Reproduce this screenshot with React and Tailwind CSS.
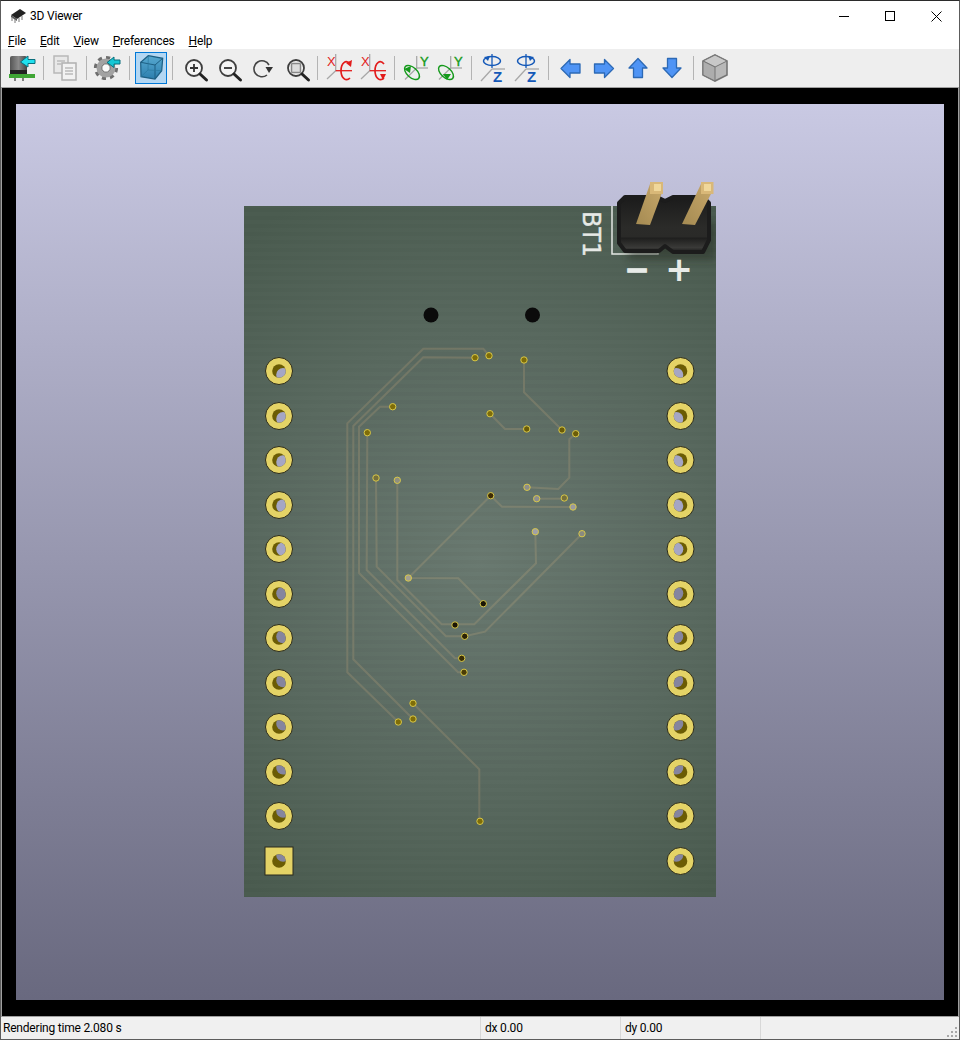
const FONT = { fontFamily: 'Roboto, "Noto Sans", sans-serif', letterSpacing: '-0.2px' };

const leftPads = [371, 416, 460, 505, 549, 594, 638, 683, 727, 772, 816];
const rightPads = [371, 416, 460, 505, 549, 594, 638, 683, 727, 772, 816, 861];

// x, y, colour seen through the drill
const vias = [
  [475, 357.7, '#7f6d08'], [489, 355.7, '#7f6d08'], [524, 360, '#7f6d08'], [392.7, 406.7, '#7f6d08'],
  [367.3, 432.7, '#7f6d08'], [490, 413.7, '#7f6d08'], [526.7, 429, '#6b5c08'], [562, 430, '#6b5c08'],
  [575.7, 433.7, '#6b5c08'], [376, 478, '#77703a'], [397.3, 480.3, '#8f8f80'], [527, 487.3, '#8e8e8a'],
  [490.7, 495.7, '#3e2c06'], [536.7, 498.7, '#8e8e90'], [564.3, 498, '#77703a'], [573, 507, '#9a9aa0'],
  [535.3, 531.7, '#a0a0a8'], [582, 533.7, '#8a8a80'], [408.3, 578, '#a5a090'], [483.3, 603.7, '#1a1505'],
  [455, 625, '#1a1505'], [464.7, 636.3, '#2a2205'], [461.7, 658.3, '#3a2e05'], [464, 672.3, '#4a3c05'],
  [413, 703.3, '#7f6d08'], [413, 719, '#7f6d08'], [398.3, 722, '#7f6d08'], [480, 821.3, '#7f6d08'],
];

const traces = [
  '489,355.7 483.3,348.7 423.3,348.7 347.3,423.3 347.3,672.3 398.3,722',
  '475,357.7 423.3,357.3 353.3,426 353.3,659.3 413,719',
  '392.7,406.7 380,406.7 359,426.7 359,573 458,672.3 464,672.3',
  '367.3,432.7 366.7,570 455,658.3 461.7,658.3',
  '376,478 376.7,566.7 446,636.3 464.7,636.3 485,631.7 582,533.7',
  '397.3,480.3 397.3,580 441.7,624.3 474.3,624.3 536,563.3 535.3,531.7',
  '490.7,495.7 408.3,578 458.3,578.3 483.3,603.7',
  '490.7,495.7 502,506.7 573,507',
  '527,487.3 558.3,489 569.3,477.7 569.3,439.3 575.7,433.7',
  '536.7,498.7 564.3,498.7',
  '490,413.7 505,429 526.7,429',
  '524,360 524,392.3 562,430',
  '413,703.3 479.3,769.3 479.3,821.3',
];

function Pad({ x, y, square }) {
  // the far end of the drill slides towards the middle of the view
  const bx = x + (480 - x) * 0.02;
  const by = y + (560 - y) * 0.02;
  const id = `hole-${Math.round(x)}-${y}`;
  return (
    <g>
      {square ? (
        <rect x={x - 14} y={y - 14} width="28" height="28" fill="#e4d366" stroke="#2b2b1c" />
      ) : (
        <circle cx={x} cy={y} r="13.5" fill="#e4d366" stroke="#2b2b1c" />
      )}
      <clipPath id={id}>
        <circle cx={x} cy={y} r="6.8" />
      </clipPath>
      <circle cx={x} cy={y} r="6.8" fill="#6b5c04" />
      <circle cx={bx} cy={by} r="6.8" fill={y < 560 ? '#a5a6c4' : '#85859f'} clipPath={`url(#${id})`} />
    </g>
  );
}

function Board() {
  return (
    <svg width="928" height="896" viewBox="16 104 928 896" className="block">
      <defs>
        <radialGradient id="boardShade" gradientUnits="userSpaceOnUse" cx="480" cy="560" r="400">
          <stop offset="0" stopColor="#6a7a71" />
          <stop offset="0.55" stopColor="#5a6a60" />
          <stop offset="1" stopColor="#4b5c50" />
        </radialGradient>
        <radialGradient id="traceShade" gradientUnits="userSpaceOnUse" cx="480" cy="560" r="400">
          <stop offset="0" stopColor="#7f8573" />
          <stop offset="0.55" stopColor="#727665" />
          <stop offset="1" stopColor="#666a58" />
        </radialGradient>
        <pattern id="scan" width="8" height="8" patternUnits="userSpaceOnUse">
          <rect width="8" height="4" fill="#000" opacity="0.025" />
        </pattern>
        <linearGradient id="pin" x1="0" y1="1" x2="1" y2="0">
          <stop offset="0" stopColor="#a48a52" />
          <stop offset="1" stopColor="#c8a86a" />
        </linearGradient>
        <linearGradient id="housing" x1="0" y1="0" x2="0" y2="1">
          <stop offset="0" stopColor="#1b1b1b" />
          <stop offset="0.55" stopColor="#2b2b29" />
          <stop offset="0.72" stopColor="#2a2a28" />
          <stop offset="0.75" stopColor="#1f1f1e" />
          <stop offset="0.92" stopColor="#3a3a38" />
          <stop offset="1" stopColor="#1a1a1a" />
        </linearGradient>
        <filter id="soft" x="-30%" y="-30%" width="160%" height="160%">
          <feGaussianBlur stdDeviation="4" />
        </filter>
        <clipPath id="boardClip">
          <rect x="244" y="206" width="472" height="691" />
        </clipPath>
      </defs>

      <rect x="244" y="206" width="472" height="691" fill="url(#boardShade)" />
      <rect x="244" y="206" width="472" height="691" fill="url(#scan)" />

      <g fill="none" stroke="url(#traceShade)" strokeWidth="2" strokeLinejoin="miter">
        {traces.map((t) => (
          <polyline key={t} points={t} />
        ))}
      </g>

      {vias.map(([x, y, c]) => (
        <circle key={`${x}-${y}`} cx={x} cy={y} r="3.2" fill={c} stroke="#d8c849" strokeWidth="1" />
      ))}

      <circle cx="431" cy="315" r="7.5" fill="#0b0b0b" />
      <circle cx="532.5" cy="315" r="7.5" fill="#0b0b0b" />

      {leftPads.map((y) => (
        <Pad key={y} x={279} y={y} />
      ))}
      <Pad x={279} y={861} square />
      {rightPads.map((y) => (
        <Pad key={y} x={680.5} y={y} />
      ))}

      {/* silkscreen */}
      <text
        transform="translate(583 211) rotate(90)"
        fill="#e6e9e6"
        stroke="#e6e9e6"
        strokeWidth="0.4"
        style={{ fontFamily: '"DejaVu Sans", sans-serif', fontSize: 24 }}
      >
        BT1
      </text>
      <polyline points="612,206 612,254 658,254 658,249" fill="none" stroke="#e4e7e4" strokeWidth="1.5" />

      {/* connector */}
      <g clipPath="url(#boardClip)">
        <rect x="628" y="222" width="88" height="38" fill="#20281f" opacity="0.45" filter="url(#soft)" />
      </g>
      <path
        d="M625 197 H657 L665 201 L673 197 H703 L709 203 V240 L703 252 H673 L665 246 L659 251 H625 L619 243 V203 Z"
        fill="url(#housing)"
        stroke="#1c1c1c"
        strokeWidth="4"
        strokeLinejoin="round"
      />
      <polygon points="636,224 650,225 663,190 650,184" fill="url(#pin)" />
      <polygon points="682,224 695,225 713,190 701,184" fill="url(#pin)" />
      <rect x="650" y="182" width="13" height="12" fill="#d9b878" />
      <rect x="654" y="184" width="7" height="7" fill="#f0d79a" />
      <rect x="701" y="182" width="12.5" height="12" fill="#d9b878" />
      <rect x="704" y="184" width="7" height="7" fill="#f0d79a" />
      <text x="637" y="280" textAnchor="middle" fill="#e8ebe8" stroke="#e8ebe8" strokeWidth="1" style={{ fontFamily: '"DejaVu Sans", sans-serif', fontSize: 30, fontWeight: 700 }}>
        −
      </text>
      <text x="679" y="281" textAnchor="middle" fill="#e8ebe8" style={{ fontFamily: '"DejaVu Sans", sans-serif', fontSize: 33, fontWeight: 700 }}>
        +
      </text>
    </svg>
  );
}

function Icon({ children }) {
  return (
    <svg width="28" height="28" viewBox="0 0 28 28" className="overflow-visible">
      {children}
    </svg>
  );
}

function Btn({ active, children }) {
  return (
    <div className="w-[34px] h-[38px] flex items-center justify-center shrink-0">
      {active ? (
        <div className="w-[32px] h-[32px] flex items-center justify-center bg-[#b3d7f3] border border-[#0078d7]">
          {children}
        </div>
      ) : (
        children
      )}
    </div>
  );
}

function Sep() {
  return (
    <div className="w-[9px] h-[24px] shrink-0 flex justify-center">
      <div className="w-px h-full bg-[#b4b4b4]" />
    </div>
  );
}

function Arrow({ points }) {
  return <polygon points={points} fill="#4f94f5" stroke="#2c69b5" strokeWidth="1.3" strokeLinejoin="round" />;
}

function Magnifier({ children }) {
  return (
    <Icon>
      <circle cx="14" cy="14" r="8" fill="#f4f4f4" stroke="#3e3e3e" strokeWidth="1.8" />
      <line x1="20" y1="20" x2="26.5" y2="26" stroke="#222" strokeWidth="3" strokeLinecap="round" />
      {children}
    </Icon>
  );
}

function AxisIcon({ label, color, kind, flip }) {
  const text = { fontFamily: '"Liberation Sans", sans-serif', fontSize: kind === 'z' ? 15 : 13, fontWeight: kind === 'z' ? 700 : 400, letterSpacing: 0 };
  if (kind === 'x') {
    return (
      <Icon>
        <text x="2" y="12" fill={color} style={text}>{label}</text>
        <path d="M10.7 0 V16.7 L2 25" fill="none" stroke="#a8a8a8" strokeWidth="1.3" />
        <path d="M10.7 16.7 H27" stroke={color} strokeWidth="1.3" />
        <path d="M25 10 C21 5 16 9 16 16.7 C16 24 21 28 25 24" fill="none" stroke={color} strokeWidth="1.7" />
        {flip ? (
          <polygon points="21,20 27,20 24,26" fill={color} />
        ) : (
          <polygon points="21,9 27,6 26,13" fill={color} />
        )}
      </Icon>
    );
  }
  if (kind === 'y') {
    return (
      <Icon>
        <text x="18" y="12" fill={color} stroke={color} strokeWidth="0.4" style={text}>{label}</text>
        <path d="M14.7 2 V14 L3 25.5" fill="none" stroke="#a8a8a8" strokeWidth="1.3" />
        <path d="M14.7 14 H26" stroke="#a8a8a8" strokeWidth="1.3" />
        <ellipse cx="10" cy="18.5" rx="9" ry="5" transform="rotate(42 10 18.5)" fill="none" stroke={color} strokeWidth="1.5" />
        {flip ? (
          <polygon points="7,20 15,20 11,26" fill={color} />
        ) : (
          <polygon points="2,15 9,12 8,19" fill={color} />
        )}
      </Icon>
    );
  }
  return (
    <Icon>
      <path d="M13 15 H26" stroke="#a8a8a8" strokeWidth="1.3" />
      <path d="M13 15 L2 27" stroke="#a8a8a8" strokeWidth="1.3" />
      <path d="M13 0 V14" stroke={color} strokeWidth="1.3" />
      <ellipse cx="13" cy="7" rx="8.5" ry="4.5" fill="none" stroke={color} strokeWidth="1.5" />
      {flip ? (
        <polygon points="15,2 21,3 17,7" fill={color} />
      ) : (
        <polygon points="5,3 11,2 9,7" fill={color} />
      )}
      <text x="14" y="28" fill={color} style={text}>{label}</text>
    </Icon>
  );
}

function Toolbar() {
  return (
    <div className="h-[38px] bg-[#eeeeee] flex items-center pl-[4px] border-b border-[#a0a0a0] box-content">
      <Btn>
        <Icon>
          <defs>
            <linearGradient id="capBody" x1="0" y1="0" x2="1" y2="0">
              <stop offset="0" stopColor="#555" />
              <stop offset="0.5" stopColor="#8a8a8a" />
              <stop offset="1" stopColor="#444" />
            </linearGradient>
          </defs>
          <rect x="2" y="2" width="17" height="18" rx="2" fill="url(#capBody)" />
          <rect x="2" y="16" width="17" height="4" fill="#222" />
          <rect x="1" y="20" width="26" height="4" fill="#3fa535" />
          <path d="M7 24 V27 M15 24 V27" stroke="#333" strokeWidth="1.2" />
          <polygon points="27,5.5 20,5.5 20,2 12.5,8 20,13 20,9.5 27,9.5" fill="#1fe0ee" stroke="#0b6f7d" />
        </Icon>
      </Btn>
      <Sep />
      <Btn>
        <Icon>
          <rect x="3" y="2" width="14" height="17" fill="#e8e8e8" stroke="#b8b8b8" strokeWidth="1.5" />
          <rect x="11" y="9" width="14" height="17" fill="#f2f2f2" stroke="#b0b0b0" strokeWidth="1.5" />
          <path d="M6 7 H14 M6 10 H10 M14 14 H22 M14 17 H22 M14 20 H22" stroke="#bbb" strokeWidth="1.5" />
        </Icon>
      </Btn>
      <Sep />
      <Btn>
        <Icon>
          <circle cx="12" cy="14" r="10.5" fill="none" stroke="#6e6e6e" strokeWidth="3.2" strokeDasharray="4.1 4.1" />
          <circle cx="12" cy="14" r="7" fill="none" stroke="#a2a2a2" strokeWidth="5" />
          <circle cx="12" cy="14" r="4.2" fill="#fafafa" stroke="#444" strokeWidth="0.8" />
          <polygon points="26,6 20,6 20,3 13,8.5 20,13.5 20,10 26,10" fill="#14c7d4" stroke="#0b6f7d" />
        </Icon>
      </Btn>
      <Sep />
      <Btn active>
        <Icon>
          <defs>
            <linearGradient id="cubeFill" x1="0" y1="0" x2="0" y2="1">
              <stop offset="0" stopColor="#58a9d0" />
              <stop offset="1" stopColor="#2c7fae" />
            </linearGradient>
          </defs>
          <polygon points="11.3,1.7 25.7,4.3 24.7,16.7 18,25 4,22.7 3.7,8.3" fill="url(#cubeFill)" stroke="#1d5f83" strokeWidth="1.2" />
          <path d="M3.7 8.3 L18 11 L25.7 4.3 M18 11 V25" fill="none" stroke="#1d5f83" strokeWidth="1" />
          <path d="M4 22.7 L11 16 L24.7 16.7 M11.3 1.7 L11 16" fill="none" stroke="#2a789f" strokeWidth="0.7" />
        </Icon>
      </Btn>
      <Sep />
      <Btn>
        <Magnifier>
          <path d="M10 14 H18 M14 10 V18" stroke="#333" strokeWidth="1.8" />
        </Magnifier>
      </Btn>
      <Btn>
        <Magnifier>
          <path d="M10 14 H18" stroke="#333" strokeWidth="1.8" />
        </Magnifier>
      </Btn>
      <Btn>
        <Icon>
          <path d="M19 21 A8 8 0 1 1 21 11" fill="none" stroke="#444" strokeWidth="1.6" />
          <polygon points="17.5,13 25,13 21,19" fill="#333" />
        </Icon>
      </Btn>
      <Btn>
        <Magnifier>
          <rect x="9.5" y="9.5" width="9" height="9" rx="1" fill="#ddd" stroke="#888" strokeWidth="1.5" />
        </Magnifier>
      </Btn>
      <Sep />
      <Btn><AxisIcon label="X" color="#e21c1c" kind="x" /></Btn>
      <Btn><AxisIcon label="X" color="#e21c1c" kind="x" flip /></Btn>
      <Sep />
      <Btn><AxisIcon label="Y" color="#159a1c" kind="y" /></Btn>
      <Btn><AxisIcon label="Y" color="#159a1c" kind="y" flip /></Btn>
      <Sep />
      <Btn><AxisIcon label="Z" color="#1559b8" kind="z" /></Btn>
      <Btn><AxisIcon label="Z" color="#1559b8" kind="z" flip /></Btn>
      <Sep />
      <Btn>
        <Icon>
          <Arrow points="5,14.5 14,5.5 14,10 24,10 24,19 14,19 14,23.5" />
        </Icon>
      </Btn>
      <Btn>
        <Icon>
          <Arrow points="23.5,14.5 14.5,5.5 14.5,10 4.5,10 4.5,19 14.5,19 14.5,23.5" />
        </Icon>
      </Btn>
      <Btn>
        <Icon>
          <Arrow points="14,4.5 23,14 18.5,14 18.5,23.5 9.5,23.5 9.5,14 5,14" />
        </Icon>
      </Btn>
      <Btn>
        <Icon>
          <Arrow points="14,23.5 23,14 18.5,14 18.5,4.5 9.5,4.5 9.5,14 5,14" />
        </Icon>
      </Btn>
      <Sep />
      <Btn>
        <Icon>
          <polygon points="14,1 26,7 26,21 14,27 2,21 2,7" fill="#b8b8b8" stroke="#757575" strokeWidth="1.6" />
          <polygon points="14,1 26,7 14,13 2,7" fill="#c8c8c8" stroke="#757575" strokeWidth="1" />
          <polygon points="2,7 14,13 14,27 2,21" fill="#adadad" stroke="#757575" strokeWidth="1" />
        </Icon>
      </Btn>
    </div>
  );
}

export default function App() {
  return (
    <div
      className="w-[960px] h-[1040px] flex flex-col bg-white border border-[#5c5c5c] border-t-[#2b2b2b] text-black text-[12px] overflow-hidden"
      style={FONT}
    >
      {/* title bar */}
      <div className="h-[30px] flex items-center bg-white shrink-0">
        <svg width="18" height="16" viewBox="0 0 18 16" className="ml-[8px]">
          <polygon points="2,7 11,1 17,5 8,11" fill="#222" />
          <polygon points="2,7 8,11 8,13 2,9" fill="#555" />
          <path d="M3 9 V13 M6 11 V15 M10 10 V14 M13 8 V12" stroke="#777" />
        </svg>
        <span className="ml-[3px] leading-none">3D Viewer</span>
        <div className="ml-auto flex items-center">
          <div className="w-[46px] h-[30px] flex items-center justify-center">
            <div className="w-[10px] h-px bg-black" />
          </div>
          <div className="w-[46px] h-[30px] flex items-center justify-center">
            <div className="w-[10px] h-[10px] border border-black" />
          </div>
          <div className="w-[46px] h-[30px] flex items-center justify-center">
            <svg width="11" height="11" viewBox="0 0 11 11">
              <path d="M0.5 0.5 L10.5 10.5 M10.5 0.5 L0.5 10.5" stroke="#000" />
            </svg>
          </div>
        </div>
      </div>

      {/* menu bar */}
      <div className="h-[18px] flex items-center pl-[7px] pt-[2px] bg-white shrink-0 gap-[14px]">
        <span><u>F</u>ile</span>
        <span><u>E</u>dit</span>
        <span><u>V</u>iew</span>
        <span><u>P</u>references</span>
        <span><u>H</u>elp</span>
      </div>

      <Toolbar />

      {/* 3D canvas */}
      <div className="flex-1 min-h-0 bg-black border-x border-[#a0a0a0] px-[14px] pt-[16px] flex">
        <div className="w-[928px] h-[896px] bg-gradient-to-b from-[#c9c9e3] to-[#69697f]">
          <Board />
        </div>
      </div>

      {/* status bar */}
      <div className="h-[23px] shrink-0 bg-[#f0f0f0] border-t border-[#a0a0a0] flex items-center text-[12px] leading-none">
        <div className="w-[480px] h-full pl-[2px] flex items-center border-r border-[#d8d8d8]">Rendering time 2.080 s</div>
        <div className="w-[140px] h-full pl-[4px] flex items-center border-r border-[#d8d8d8]">dx 0.00</div>
        <div className="w-[140px] h-full pl-[4px] flex items-center border-r border-[#d8d8d8]">dy 0.00</div>
        <svg width="11" height="11" viewBox="0 0 11 11" className="ml-auto mt-auto mb-px mr-px" fill="#a8a8a8">
          <rect x="8" y="0" width="2" height="2" />
          <rect x="4" y="4" width="2" height="2" />
          <rect x="8" y="4" width="2" height="2" />
          <rect x="0" y="8" width="2" height="2" />
          <rect x="4" y="8" width="2" height="2" />
          <rect x="8" y="8" width="2" height="2" />
        </svg>
      </div>
    </div>
  );
}
